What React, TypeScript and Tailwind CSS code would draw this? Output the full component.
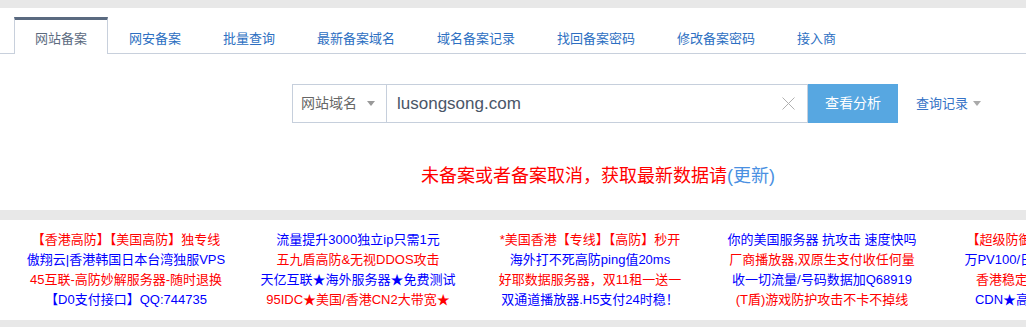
import React from 'react'

const tabs = ['网站备案', '网安备案', '批量查询', '最新备案域名', '域名备案记录', '找回备案密码', '修改备案密码', '接入商']

type Line = { t: string; c: 'r' | 'b' }

const ads: Line[][] = [
  [
    { t: '【香港高防】【美国高防】独专线', c: 'r' },
    { t: '傲翔云|香港韩国日本台湾独服VPS', c: 'b' },
    { t: '45互联-高防妙解服务器-随时退换', c: 'r' },
    { t: '【D0支付接口】QQ:744735', c: 'b' },
  ],
  [
    { t: '流量提升3000独立ip只需1元', c: 'b' },
    { t: '五九盾高防&无视DDOS攻击', c: 'r' },
    { t: '天亿互联★海外服务器★免费测试', c: 'b' },
    { t: '95IDC★美国/香港CN2大带宽★', c: 'r' },
  ],
  [
    { t: '*美国香港【专线】【高防】秒开', c: 'r' },
    { t: '海外打不死高防ping值20ms', c: 'b' },
    { t: '好耶数据服务器，双11租一送一', c: 'r' },
    { t: '双通道播放器.H5支付24时稳！', c: 'b' },
  ],
  [
    { t: '你的美国服务器 抗攻击 速度快吗', c: 'b' },
    { t: '厂商播放器,双原生支付收任何量', c: 'r' },
    { t: '收一切流量/号码数据加Q68919', c: 'b' },
    { t: '(T盾)游戏防护攻击不卡不掉线', c: 'r' },
  ],
  [
    { t: '【超级防御服务器】防CC攻击', c: 'r' },
    { t: '万PV100/日IP只需1元广告联盟', c: 'b' },
    { t: '香港稳定高速服务器特价中', c: 'r' },
    { t: 'CDN★高防服务器★免备案', c: 'b' },
  ],
]

const font = { fontFamily: '"Liberation Sans", "Noto Sans CJK SC", sans-serif' }

export default function App() {
  return (
    <div className="w-[1026px] h-[327px] overflow-hidden bg-white" style={font}>
      <div className="w-[1190px]">
        <div className="h-[8px] bg-[#e8e8e8]" />

        {/* tabs */}
        <div className="flex pl-[14px] pt-[9px] border-b border-[#c8d0dc]">
          {tabs.map((t, i) => (
            <div
              key={t}
              className={
                i === 0
                  ? 'h-[37px] -mb-px px-5 pt-[9px] text-[13px] leading-[20px] text-[#5d6b7f] bg-white border-x border-t-[3px] border-x-[#c8d0dc] border-t-[#5a6a80]'
                  : 'h-[37px] -mb-px px-5 pt-[9px] text-[13px] leading-[20px] text-[#2d6fc2] border-x border-t-[3px] border-transparent'
              }
            >
              {t}
            </div>
          ))}
        </div>

        {/* search */}
        <div className="flex justify-center mt-[30px]">
          <div className="relative flex h-[39px]">
            <div className="w-[95px] flex items-center justify-between pl-[8px] pr-[11px] border border-[#c6cfdc] text-[14px] text-[#666]">
              <span>网站域名</span>
              <span className="w-0 h-0 border-x-[4px] border-x-transparent border-t-[5px] border-t-[#999]" />
            </div>
            <div className="w-[421px] flex items-center justify-between pl-[10px] pr-[12px] border-y border-r border-[#c6cfdc]">
              <span className="text-[17px] text-[#4a5668]">lusongsong.com</span>
              <svg width="13" height="13" viewBox="0 0 13 13">
                <path d="M0.5 0.5 L12.5 12.5 M12.5 0.5 L0.5 12.5" stroke="#b0b0b0" strokeWidth="1" />
              </svg>
            </div>
            <div className="w-[90px] flex items-center justify-center bg-[#57a7e1] text-white text-[14px]">查看分析</div>
            <div className="absolute left-[calc(100%+18px)] top-0 h-full flex items-center gap-[5px] whitespace-nowrap text-[13px] text-[#3572c6]">
              <span>查询记录</span>
              <span className="w-0 h-0 border-x-[4px] border-x-transparent border-t-[5px] border-t-[#aaa]" />
            </div>
          </div>
        </div>

        {/* message */}
        <div className="mt-[41px] pl-[6px] text-center text-[18px] leading-[24px] text-[#ff0000]">
          未备案或者备案取消，获取最新数据请<span className="text-[#4a90e2]">(更新)</span>
        </div>

        {/* ads */}
        <div className="mt-[22px] border-y-[10px] border-[#e8e8e8]">
          <div className="grid grid-cols-[repeat(5,232px)] pl-[10px] py-[10px]">
            {ads.map((col, i) => (
              <div key={i} className="flex flex-col items-center">
                {col.map((l, j) => (
                  <div
                    key={j}
                    className={
                      l.c === 'r'
                        ? 'text-[13px] leading-[20px] whitespace-nowrap text-[#ff0000]'
                        : 'text-[13px] leading-[20px] whitespace-nowrap text-[#0000ff]'
                    }
                  >
                    {l.t}
                  </div>
                ))}
              </div>
            ))}
          </div>
        </div>
      </div>
    </div>
  )
}
